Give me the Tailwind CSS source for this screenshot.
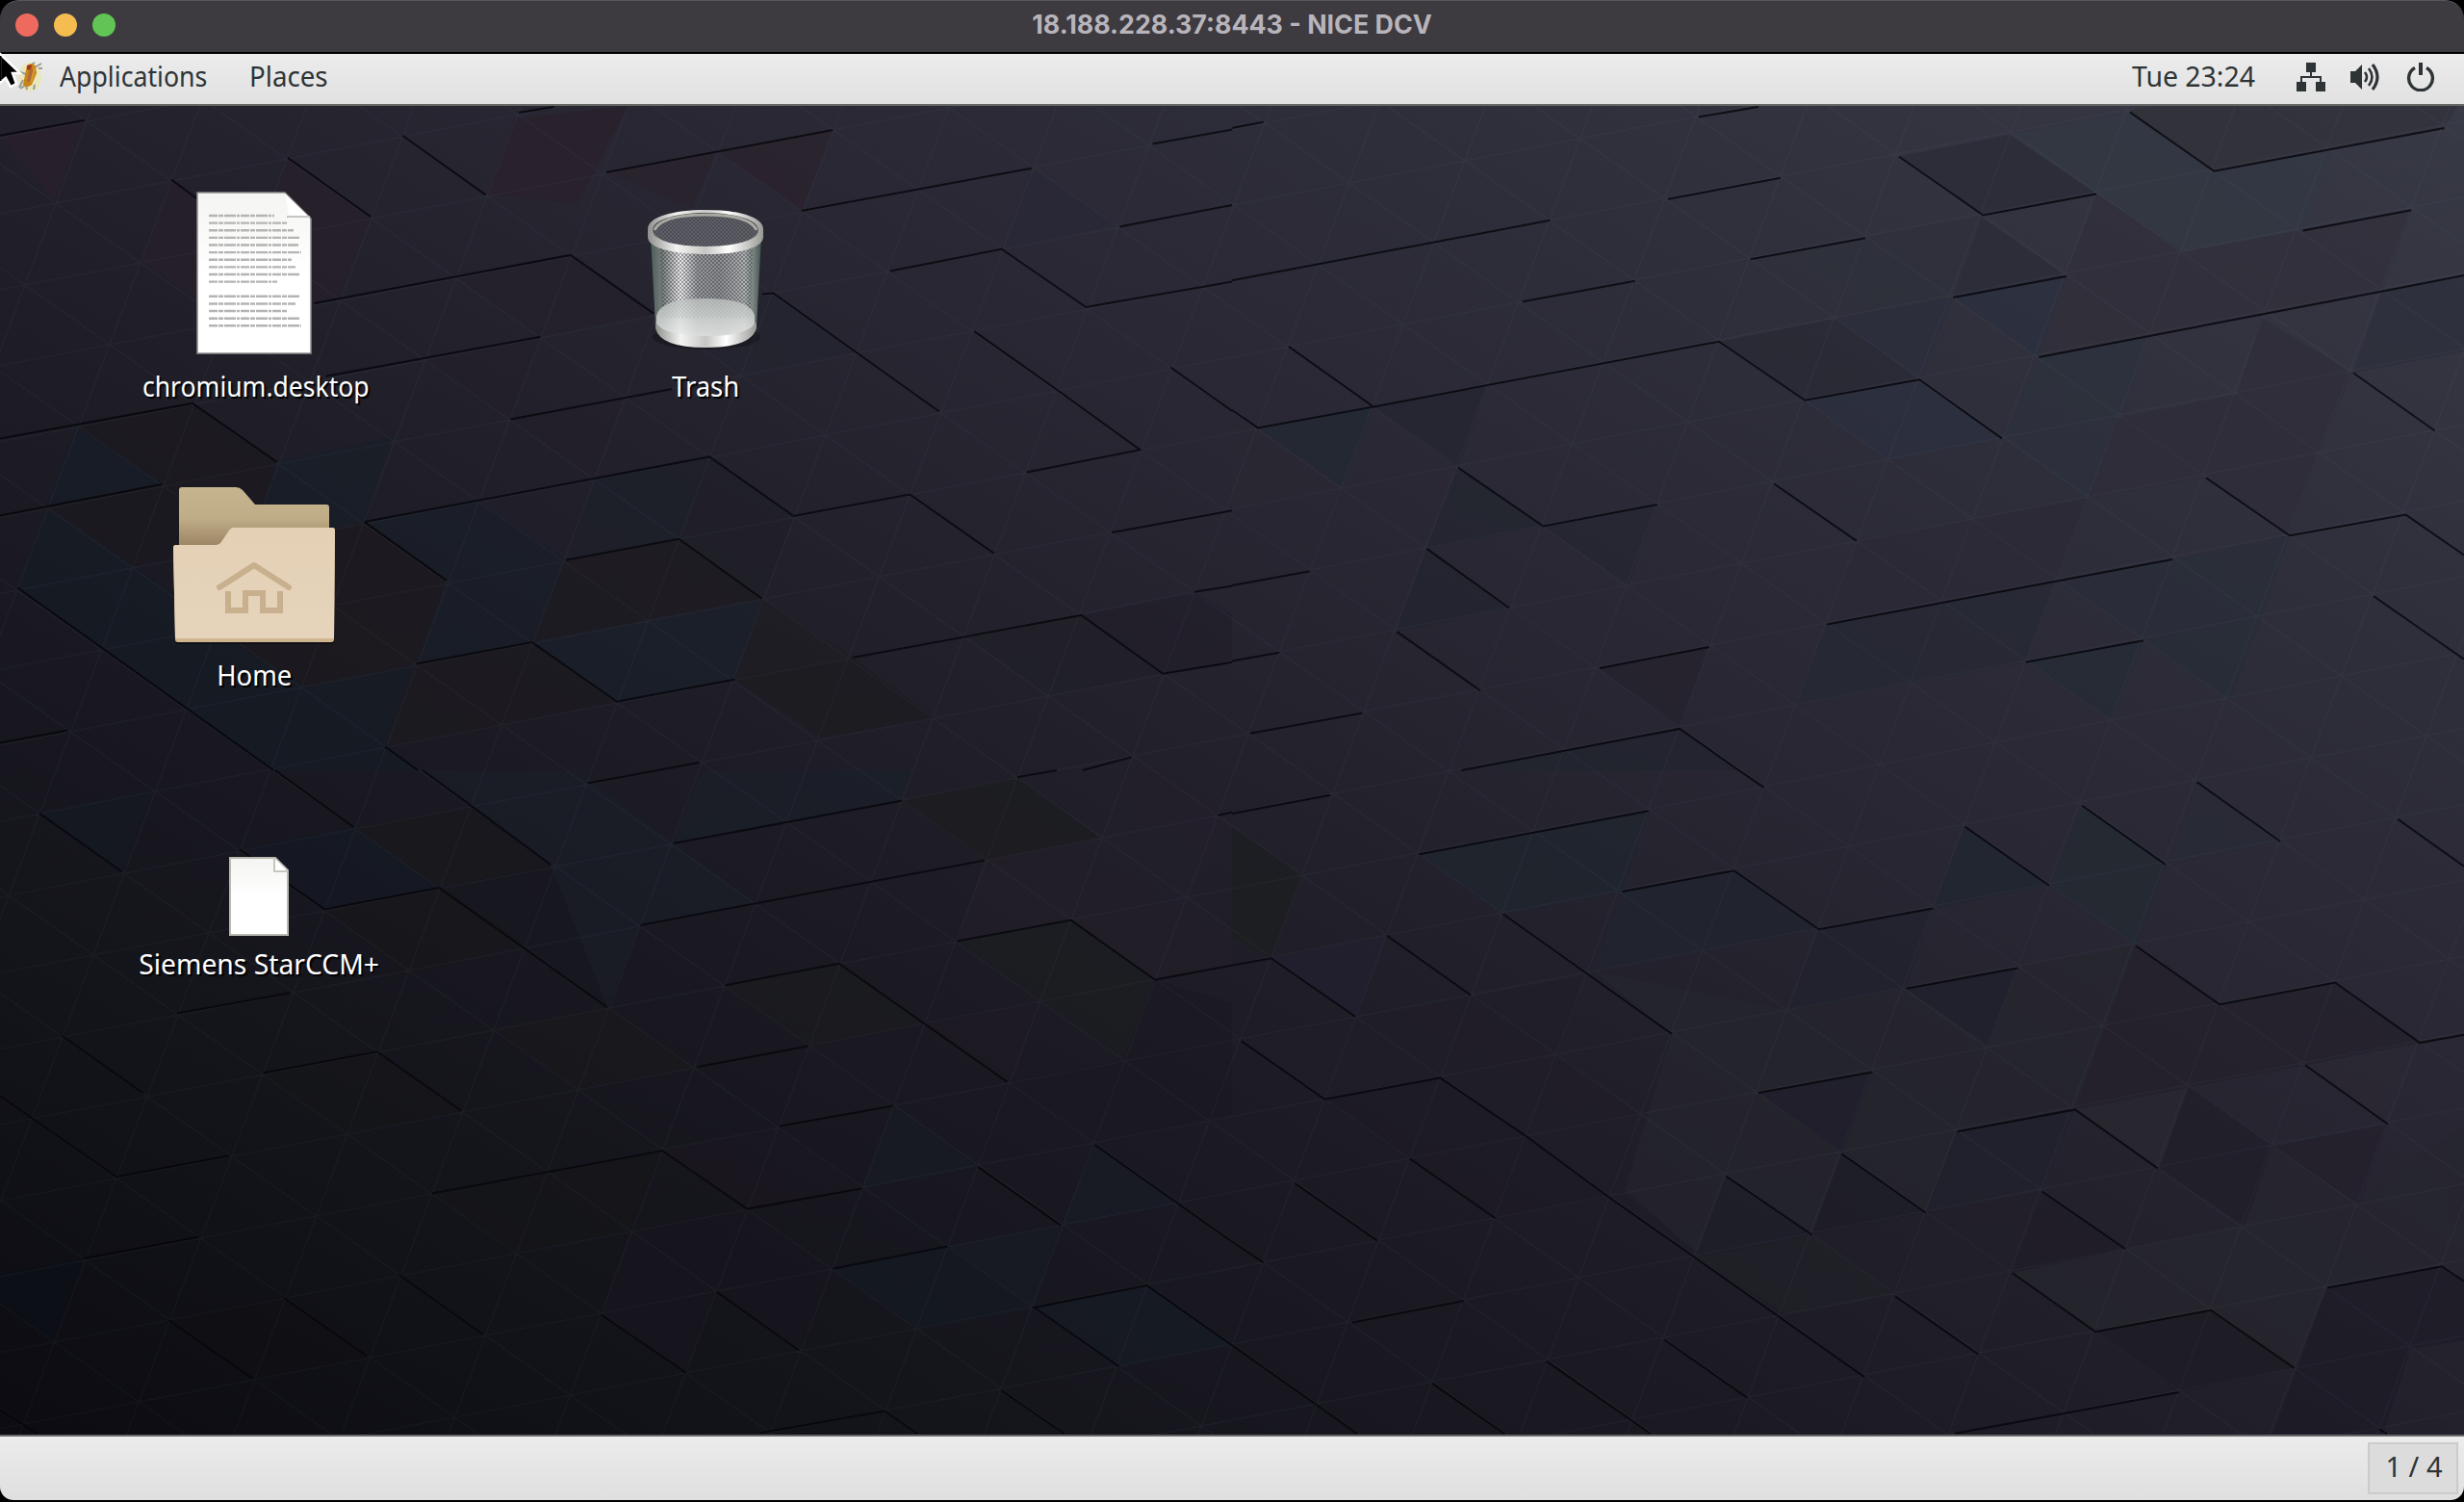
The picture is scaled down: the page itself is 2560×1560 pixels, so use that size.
<!DOCTYPE html>
<html lang="en">
<head>
<meta charset="utf-8">
<title>18.188.228.37:8443 - NICE DCV</title>
<script src="https://cdn.jsdelivr.net/npm/@tailwindcss/browser@4"></script>
</head>
<body class="bg-black overflow-hidden">
<div class="relative flex h-[1560px] w-[2560px] flex-col overflow-hidden bg-black font-['Noto_Sans',sans-serif] text-[29px] leading-none text-[#2e3436]">

  <!-- window title bar -->
  <header class="flex h-[54px] shrink-0 items-center rounded-t-[20px] border-t border-[#5a585e] bg-[#3d3a40] px-4">
    <div class="flex w-[300px] gap-4 pb-[3px]">
      <span class="size-6 rounded-full bg-[#ee6a5f]"></span>
      <span class="size-6 rounded-full bg-[#f5bd4f]"></span>
      <span class="size-6 rounded-full bg-[#61c454]"></span>
    </div>
    <h1 class="flex-1 pb-[5px] text-center font-['Inter',sans-serif] text-[26.8px] font-bold whitespace-nowrap text-[#b8b4bb]">18.188.228.37:8443 - NICE DCV</h1>
    <div class="w-[300px]"></div>
  </header>

  <!-- top panel -->
  <nav class="mt-[2px] flex h-[54px] shrink-0 items-center border-b-2 border-[#666866] bg-linear-to-b from-[#ececec] to-[#e1e1e1] pb-[4px] pl-[16px] pr-[30px]">
    <svg class="mr-[16px] h-[36px] w-[30px]" viewBox="0 0 30 36">
      <ellipse cx="15" cy="18" rx="12" ry="15" fill="#e9e6a8" opacity=".65"/>
      <path d="M2 12l9 3M20 8l7-4M24 9l4 0M5 30l6-4 1 5M20 26l-1 5M8 21l-4 8M17 5l3-2" stroke="#999b94" stroke-width="2" fill="none"/>
      <path d="M12 6q6-4 9 1l1 7-5 12q-5 4-9 0l2-10z" fill="#c98317"/>
      <path d="M12 6l5-1-1 6-4-1z" fill="#a5351e"/>
      <path d="M17 10l-3 13" stroke="#a96a3a" stroke-width="4"/>
      <path d="M20 9l-4 15" stroke="#d99a28" stroke-width="2"/>
    </svg>
    <span class="w-[197px] origin-left scale-x-[.92] pb-[3px] whitespace-nowrap">Applications</span>
    <span class="flex-1 pb-[3px] whitespace-nowrap"><span class="inline-block origin-left scale-x-[.955]">Places</span></span>
    <span class="w-[171px] origin-left scale-x-[.98] pb-[3px] whitespace-nowrap">Tue 23:24</span>
    <svg class="h-[30px] w-[30px]" viewBox="0 0 30 30" fill="#2e3436"><path d="M10 0h10v10h-4v4h10v6h4v10H20V20h4v-4H6v4h4v10H0V20h4v-6h10v-4h-4z"/></svg>
    <svg class="ml-[26px] h-[30px] w-[32px]" viewBox="0 0 32 30"><path d="M0 9h5l7-7v26l-7-7H0z" fill="#2e3436"/><path d="M15 10q4 5 0 10M19 6q7 9 0 18" fill="none" stroke="#2e3436" stroke-width="2.600"/><path d="M23 2q10 13 0 26" fill="none" stroke="#2e3436" stroke-width="3.200"/></svg>
    <svg class="ml-[26px] h-[30px] w-[30px]" viewBox="0 0 30 30" fill="none" stroke="#2e3436"><path d="M9 5.500A12.400 12.400 0 1 0 21 5.500" stroke-width="3.400"/><path d="M15 0v13" stroke-width="4"/></svg>
  </nav>

  <!-- desktop -->
  <main class="relative h-[1380px] shrink-0 overflow-hidden">
    <svg class="absolute inset-0 h-[1380px] w-[2560px]" viewBox="0 110 2560 1380">
      <defs>
        <linearGradient id="base" gradientUnits="userSpaceOnUse" x1="700" y1="1900" x2="1860" y2="-250">
          <stop offset="0" stop-color="#0b0b11"/><stop offset=".18" stop-color="#13131a"/><stop offset=".36" stop-color="#1b1a23"/><stop offset=".5" stop-color="#22212b"/><stop offset=".68" stop-color="#2a2935"/><stop offset="1" stop-color="#373945"/>
        </linearGradient>
      </defs>
      <rect y="110" width="2560" height="1380" fill="url(#base)"/>
      <g id="tints" opacity=".6"></g>
      <path id="lattice" fill="none" stroke="#a8b0c8" stroke-opacity=".042" stroke-width="1.500"/>
      <g id="edges" fill="none" stroke="#05050a" stroke-width="2" stroke-opacity=".8"></g>
    </svg>

    <div class="absolute left-[204px] top-[89px]">
      <svg class="h-[169px] w-[120px]" viewBox="0 0 120 169">
        <defs><linearGradient id="paper" x2="0" y2="1"><stop stop-color="#f4f4f2"/><stop offset=".5" stop-color="#fff"/></linearGradient></defs>
        <path d="M1 1H92L119 28V168H1z" fill="url(#paper)" stroke="#8c8c8e" stroke-width="1.500"/>
        <path d="M92 2L118 27H96q-1-14-4-25z" fill="#fff"/><path d="M94 26h24" stroke="#c4c4c4" stroke-width="2"/>
        <g id="lines" stroke="#b4b4b4" stroke-width="2.400" stroke-dasharray="9 1 5 1 12 1 3 1"></g>
      </svg>
    </div>
    <svg class="absolute left-[672px] top-[102px] h-[158px] w-[124px]" viewBox="0 0 124 158">
      <defs>
        <linearGradient id="glass"><stop stop-color="#4b5d59"/><stop offset=".1" stop-color="#747b78"/><stop offset=".27" stop-color="#eeeeee"/><stop offset=".42" stop-color="#98999b"/><stop offset=".62" stop-color="#8d8e91"/><stop offset=".85" stop-color="#b0b3b3"/><stop offset="1" stop-color="#43534f"/></linearGradient>
        <linearGradient id="rim"><stop stop-color="#8e908c"/><stop offset=".25" stop-color="#f3f3f1"/><stop offset=".5" stop-color="#c6c7c3"/><stop offset=".7" stop-color="#fff"/><stop offset="1" stop-color="#989a96"/></linearGradient>
        <linearGradient id="floor" x2="0" y2="1"><stop stop-color="#bcc2c0"/><stop offset="1" stop-color="#eceeed"/></linearGradient>
        <pattern id="mesh" width="4" height="4" patternUnits="userSpaceOnUse"><path d="M0 0h2v2H0zM2 2h2v2H2z" fill="#33333c" opacity=".45"/></pattern>
      </defs>
      <ellipse cx="62" cy="138" rx="56" ry="13" fill="#000" opacity=".25"/>
      <path d="M4 34L9 126Q14 148 61 148T114 126L119 34z" fill="url(#glass)"/>
      <path d="M14 44H110L108 118H16z" fill="url(#mesh)"/>
      <path d="M10 116Q14 98 61 98T112 116V124Q106 139 61 139T10 124z" fill="url(#floor)" opacity=".8"/>
      <path d="M9 122Q16 137 61 137T114 122V129Q108 149 61 149T9 129z" fill="url(#rim)"/>
      <ellipse cx="61" cy="29" rx="57" ry="19" fill="#606068"/><ellipse cx="61" cy="29" rx="55" ry="17" fill="url(#mesh)"/>
      <path d="M8 27Q15 11 61 11T114 27" fill="none" stroke="#a8aaa1" stroke-width="3"/>
      <path d="M1 26C1 13 28 6 61 6s60 7 60 20v8C121 46 94 52 61 52S1 46 1 34zM6 27c0 11 26 17 55 17s55-6 55-17S90 9 61 9 6 16 6 27z" fill="url(#rim)" fill-rule="evenodd"/>
    </svg>
    <svg class="absolute left-[178px] top-[392px] h-[172px] w-[174px]" viewBox="0 0 174 172">
      <defs>
        <linearGradient id="back" x2="0" y2="1"><stop stop-color="#c5b48e"/><stop offset=".45" stop-color="#bfad87"/><stop offset=".85" stop-color="#9c8664"/></linearGradient>
        <linearGradient id="front" x2="0" y2="1"><stop stop-color="#e4d0b5"/><stop offset="1" stop-color="#e5d4bb"/></linearGradient>
      </defs>
      <path d="M5 164h164v3H5z" fill="#000" opacity=".4"/>
      <path d="M8 7q0-3 3-3h56q4 0 7 3l13 15h74q3 0 3 3v50H8z" fill="url(#back)"/>
      <path d="M2 67q0-3 3-3h42q3 0 5-3l8-12q2-3 5-3h102q3 0 3 3l-1 113q0 3-3 3H7q-3 0-3-3z" fill="#d0b68f"/>
      <path d="M2 67q0-3 3-3h42q3 0 5-3l8-12q2-3 5-3h102q3 0 3 3l-1 112H4z" fill="url(#front)"/>
      <g fill="none" stroke="#c8af8d" stroke-width="6"><path d="M50 108L86 85l36 23" stroke-linecap="round" stroke-linejoin="round"/><path d="M59 112v20h18v-18h18v18h18v-20"/></g>
    </svg>
    <svg class="absolute left-[238px] top-[780px] h-[82px] w-[62px]" viewBox="0 0 62 82">
      <path d="M1 1H48L61 14V81H1z" fill="url(#paper)" stroke="#b9b9b1" stroke-width="2"/><path d="M47 1V15H61" fill="#fff" stroke="#c6c6be" stroke-width="2"/>
    </svg>

    <div class="absolute left-[66px] top-[276px] flex w-[400px] justify-center text-white [text-shadow:2px_2px_1px_#000]"><span class="scale-x-[.915]">chromium.desktop</span></div>
    <div class="absolute left-[533px] top-[276px] flex w-[400px] justify-center text-white [text-shadow:2px_2px_1px_#000]"><span class="scale-x-[.945]">Trash</span></div>
    <div class="absolute left-[64px] top-[576px] flex w-[400px] justify-center text-white [text-shadow:2px_2px_1px_#000]"><span class="scale-x-[.945]">Home</span></div>
    <div class="absolute left-[69px] top-[876px] flex w-[400px] justify-center text-white [text-shadow:2px_2px_1px_#000]"><span class="scale-x-[.975]">Siemens StarCCM+</span></div>
  </main>

  <!-- bottom panel -->
  <footer class="flex h-[68px] shrink-0 items-center justify-end rounded-b-[14px] border-t-2 border-[#666668] bg-linear-to-b from-[#ececec] to-[#dfdfdf] pr-[6px]">
    <div class="flex h-[54px] w-[94px] items-center justify-center border-2 border-[#cbcbcb] bg-[#dcdcdc] pb-[6px] pl-[2px]">1 / 4</div>
  </footer>

  <!-- pointer -->
  <svg class="absolute left-0 top-[54px] h-[40px] w-[24px]" viewBox="0 0 24 40"><path d="M0 2L21 22H13L17 33L11 36L6 27L0 32z" fill="#000" stroke="#fff" stroke-width="2.500"/><path d="M0 4V30" stroke="#000" stroke-width="3"/></svg>
</div>

<script>
const NS = 'http://www.w3.org/2000/svg';
const add = (parent, tag, attrs) => {
  const el = document.createElementNS(NS, tag);
  for (const k in attrs) el.setAttribute(k, attrs[k]);
  parent.appendChild(el);
};
const byId = id => document.getElementById(id);

// The wallpaper is described in four tiles, each on a 1568-unit grid.
const tiles = [
  { x: 0, y: 110, sx: 1280 / 1568, sy: 690 / 1568,
    edges: '0,70 108,34|660,16 705,2|218,174 250,218|366,122 472,262|512,70 618,210|772,157 1060,57|1020,248 1313,147|1467,90 1568,56|1425,285 1568,234|400,466 726,352 832,490|970,444 984,442 1195,721|1133,390 1275,338 1382,475 1568,415|415,638 688,545|650,740 855,668|0,785 245,702 352,840|0,967 206,893|464,982 568,1120|464,982 903,828 1010,968 1158,917 1265,1056|720,1072 864,1022 970,1163|1240,532 1345,670 1451,812 1307,865|1490,617 1568,720|1415,1007 1568,955|1520,1147 1568,1133|1085,1302 1376,1202 1480,1340 1568,1313|530,1317 677,1266 785,1406 935,1354|22,1137 348,1568|0,1503 86,1474|490,1512 532,1568|838,1568 890,1550|1378,1568 1440,1537',
    tints: '#2b1f2c:0,70 108,34 70,222|#2b202b:655,30 800,0 735,230 620,210|#2b222c:772,157 912,108 880,240|#281f2a:366,122 472,262 430,450 400,466 330,350|#281f2a:218,174 325,310 290,500 180,365|#2b222c:912,108 1060,57 1020,248|#26202a:580,405 726,352 832,490 688,545|#251f29:540,600 688,545 650,740|#251f29:650,740 795,688 755,878|#171e27:352,840 500,780 464,982 320,1035|#181e28:464,982 610,930 720,1072 677,1266 530,1317 568,1120|#19202a:677,1266 970,1163 935,1354 785,1406|#151c25:22,1137 60,950 220,1150 300,1270 385,1365 525,1320 490,1512 540,1568 348,1568|#1b181e:0,785 245,702 352,840 320,1035 170,1085 60,942 97,755|#151d27:97,755 206,893 60,942|#1c191d:425,1000 464,982 568,1120 530,1317 390,1370 300,1270 425,1250|#1d1a1f:720,1072 864,1022 970,1163 823,1213 677,1266|#1c1a1e:530,1317 677,1266 785,1406 640,1460 490,1512|#1d2029:755,878 903,828 864,1022 720,1072|#1e1d21:970,1163 1085,1302 935,1354|#211e29:1376,1202 1520,1147 1568,1200 1568,1313 1480,1340|#1f1f28:903,828 1010,968 970,1163 864,1022|#202028:1235,1255 1376,1202 1480,1340 1335,1390|#1b1b1e:935,1354 1085,1302 1190,1445 1045,1490|#2a2838:1313,147 1420,280 1275,338|#242430:832,490 984,442 1090,580 945,635' },
  { x: 1280, y: 110, sx: 1280 / 1568, sy: 690 / 1568,
    edges: '0,52 40,38|594,26 670,2|1143,15 1250,154 1543,52|849,120 956,258 1100,208|555,220 698,170|0,412 405,270|660,362 806,312|370,462 513,413|918,452 1062,402|1363,294 1501,246|1027,593 1463,438 1568,400|72,568 180,710 33,760 0,718|180,710 620,556 729,695 875,646 980,785|1427,630 1531,767|288,854 396,992 541,941|690,892 795,1027|1240,878 1346,1014 1494,965 1568,1060|248,1045 353,1185|0,1132 99,1098|210,1241 316,1380|468,1327 607,1277|0,1310 60,1290|757,1224 1197,1070|1010,1313 1160,1262|1453,1157 1568,1306|23,1481 166,1433|292,1568 570,1470 645,1568',
    tints: '#292a36:849,120 990,68 1100,208 956,258|#292b37:952,262 1062,402 918,452|#313038:1143,15 1155,0 1560,0 1543,52 1250,154|#333944:990,68 1143,15 1250,154 1400,104 1363,294 1210,345|#312e39:1062,402 1100,208 1210,345 1501,246 1463,438 1027,593|#282933:620,556 768,502 875,646 729,695|#2b3040:729,695 875,646 980,785 835,835|#2b3040:918,452 1062,402 1027,593|#2b2e3d:768,502 918,452 875,646|#22252f:288,854 396,992 248,1045|#202932:33,760 180,710 140,900|#22252f:180,710 325,660 288,854|#21242e:248,1045 353,1185 210,1241|#252833:757,1224 1050,1120 1010,1313 865,1363 715,1415|#242631:541,941 505,1130 396,992|#25222c:468,1327 607,1277 570,1470|#242b35:1010,1313 1160,1262 1120,1450|#21242e:292,1568 570,1470 645,1568|#252d37:1160,1262 1310,1210 1270,1405|#292e39:1197,1070 1346,1014 1310,1210 1160,1262 1050,1120|#2e303a:806,312 956,258 918,452 768,502 625,555 660,362|#2c323d:1027,593 1170,540 1090,925 980,785|#2e2c38:1125,740 1280,680 1310,500 1425,630 1385,815 1346,1014 1240,878 1090,925|#2b2935:795,1027 945,975 1090,925 1050,1120 757,1224|#2b2f3b:1463,438 1568,400 1568,580 1427,630|#2b2832:0,750 33,760 140,900 0,950' },
  { x: 0, y: 800, sx: 1280 / 1568, sy: 760 / 1568,
    edges: '350,0 450,122|538,0 701,202|50,92 155,217|305,170 413,298 559,252 773,508|748,28 838,0|857,157 1148,65|815,332 1253,193|923,461 1068,414 1282,668|1218,366 1363,321 1470,449 1568,418|225,521 369,477|78,568 182,692|335,649 480,603 587,730|0,698 148,871 291,826|887,636 1028,591|992,763 1137,719|550,907 843,815 951,940 1097,896|107,1046 253,1000|1245,850 1350,975|1393,802 1568,1010|508,1081 615,1209|361,1130 467,1255|215,1178 322,1304|765,1166 873,1291|912,1117 1017,1243|1060,1068 1206,1020|1424,1278 1316,1151 1460,1104 1568,1232|968,1420 1126,1373 1168,1422|1274,1328 1355,1422|0,1370 48,1422|1295,15 1345,0|1550,97 1568,90',
    tints: '#1a2029:857,157 893,0 1160,0 1148,65|#1a1f28:538,0 735,0 960,285 815,332 773,508 701,420 665,370 701,202|#141a22:50,92 195,40 155,217|#141a24:310,168 450,122 559,252 413,298|#17171f:559,252 701,202 773,508 665,370|#231f2a:1253,193 1400,145 1435,0 1480,0 1568,100 1515,270 1568,340 1568,420 1470,449 1363,321 1218,366|#1b1720:843,815 992,763 1097,896 951,940|#1b1822:1030,591 1175,545 1137,719 992,763|#201a24:1180,545 1325,495 1290,660|#1a1e20:1218,366 1363,321 1470,449 1430,620 1325,495|#1a1c1e:923,461 1068,414 1175,545 1030,591|#141a22:1060,1068 1206,1020 1316,1151 1168,1195|#161c25:1316,1151 1460,1104 1568,1232 1424,1278|#171c24:1206,1020 1350,975 1316,1151|#171c23:1137,719 1245,850 1097,896|#0b1018:0,1080 107,1046 65,1222 0,1140|#151619:550,907 843,815 800,988 655,1032|#151619:335,649 480,603 587,730 440,778|#181c26:1393,802 1500,930 1350,975|#18171a:413,298 559,252 665,370 520,440|#19181c:455,122 600,80 701,202 559,252|#19191c:628,555 773,508 880,636 735,683|#18161f:800,988 951,940 1060,1068 1017,1243 912,1117 873,1291 765,1166|#1b1c1e:1148,65 1295,15 1400,145 1253,193|#101014:215,1178 361,1130 467,1255 322,1304|#1a1822:1282,668 1430,620 1470,449 1568,500 1568,740 1393,802 1350,975 1245,850' },
  { x: 1280, y: 800, sx: 1280 / 1568, sy: 760 / 1568,
    edges: '0,93 125,53|238,180 530,87|645,0 677,37|497,260 639,215 747,341 892,296|933,121 1040,247|1082,76 1188,202|1228,25 1334,152|1484,105 1568,206|345,308 560,565|197,354 304,482|0,418 50,403 157,528|12,580 118,705 265,659 375,785 480,915 590,1045 805,1300|858,468 1000,424|670,691 815,647|1150,376 1257,502 1404,455 1512,584 1568,567|1366,632 1471,758|923,774 1073,727 1178,853|776,822 883,948|629,870 738,995|1031,902 1137,1026|993,1077 1099,1203 1246,1157 1352,1281|1394,1109 1540,1063 1568,1095|844,1127 950,1252|920,1421 1205,1333|226,832 335,960|80,885 185,1008|0,1010 40,1055|0,1232 160,1422|153,1183 295,1137|255,1314 347,1422|400,1266 533,1422|550,1220 656,1345|1460,1412 1470,1422',
    tints: '#1f2630:933,121 1040,247 892,296|#232b32:1082,76 1188,202 1150,376 1040,247|#282b37:1228,25 1334,152 1195,200|#202430:497,260 639,215 747,341 460,430|#20222d:747,341 892,296 858,468 710,515|#1f262e:238,180 530,87 497,260 345,308|#1f1f2c:670,691 815,647 776,822|#1f202c:858,468 1000,424 963,590|#1f212c:923,774 1073,727 1030,890 883,948|#1d1b24:1099,1203 1246,1157 1352,1281 1205,1333|#1c1a25:1394,1109 1540,1063 1568,1095 1568,1222 1500,1240 1465,1421 1325,1421|#201d27:1180,853 1218,676 1325,806 1288,975|#24202c:1325,806 1471,758 1434,930|#2c2934:1366,632 1512,584 1471,758|#2b2831:1073,727 1218,676 1180,853|#1f1c26:1031,902 1137,1026 993,1077|#201d27:12,580 310,485 450,440 415,610 520,740 375,785 265,659 118,705|#232031:50,403 197,354 157,528|#1e1f2a:629,870 738,995 592,1035|#1d1d27:776,822 883,948 738,995|#202127:590,1045 738,995 844,1127 705,1165|#221f28:883,948 1031,902 993,1077 955,1250 844,1127|#1c1e1f:0,120 90,225 50,403 0,360|#26262e:560,565 460,430 710,515 858,468 963,590 1000,424 1150,376 1073,727 923,774 883,948 776,822 815,647 670,691 776,822 738,995 629,870 592,1035 500,900|#27272e:1137,1026 1290,975 1325,806 1434,930 1568,760 1568,1050 1394,1109 1352,1281 1246,1157 1099,1203 993,1077|#1d1a24:118,705 265,659 375,785 480,915 335,960|#24202a:1150,376 1257,502 1404,455 1512,584 1366,632 1073,727' }
];

for (const t of tiles) {
  const map = s => s.split(' ').map(p => { const [x, y] = p.split(','); return (t.x + x * t.sx).toFixed(1) + ',' + (t.y + y * t.sy).toFixed(1); }).join(' ');
  t.tints.split('|').forEach(s => { const [c, p] = s.split(':'); add(byId('tints'), 'polygon', { points: map(p), fill: c }); });
  t.edges.split('|').forEach(s => add(byId('edges'), 'polyline', { points: map(s) }));
}

// Faint triangular lattice over the whole wallpaper.
let d = '';
const at = (m, n) => (866 + m * 120 + n * 87.9).toFixed(1) + ' ' + (135 - m * 23 + n * 62).toFixed(1);
for (let k = -60; k <= 60; k++) {
  d += 'M' + at(-60, k) + 'L' + at(60, k) + 'M' + at(k, -60) + 'L' + at(k, 60) + 'M' + at(k - 60, 60) + 'L' + at(k + 60, -60);
}
byId('lattice').setAttribute('d', d);

// Body text of the document icon: line lengths, 0 for the paragraph break.
[68, 82, 88, 95, 93, 96, 86, 90, 95, 71, 0, 95, 90, 81, 95, 96].forEach((w, i) => {
  if (w) add(byId('lines'), 'path', { d: 'M13 ' + (25 + i * 7.62) + 'h' + w });
});
</script>
</body>
</html>
